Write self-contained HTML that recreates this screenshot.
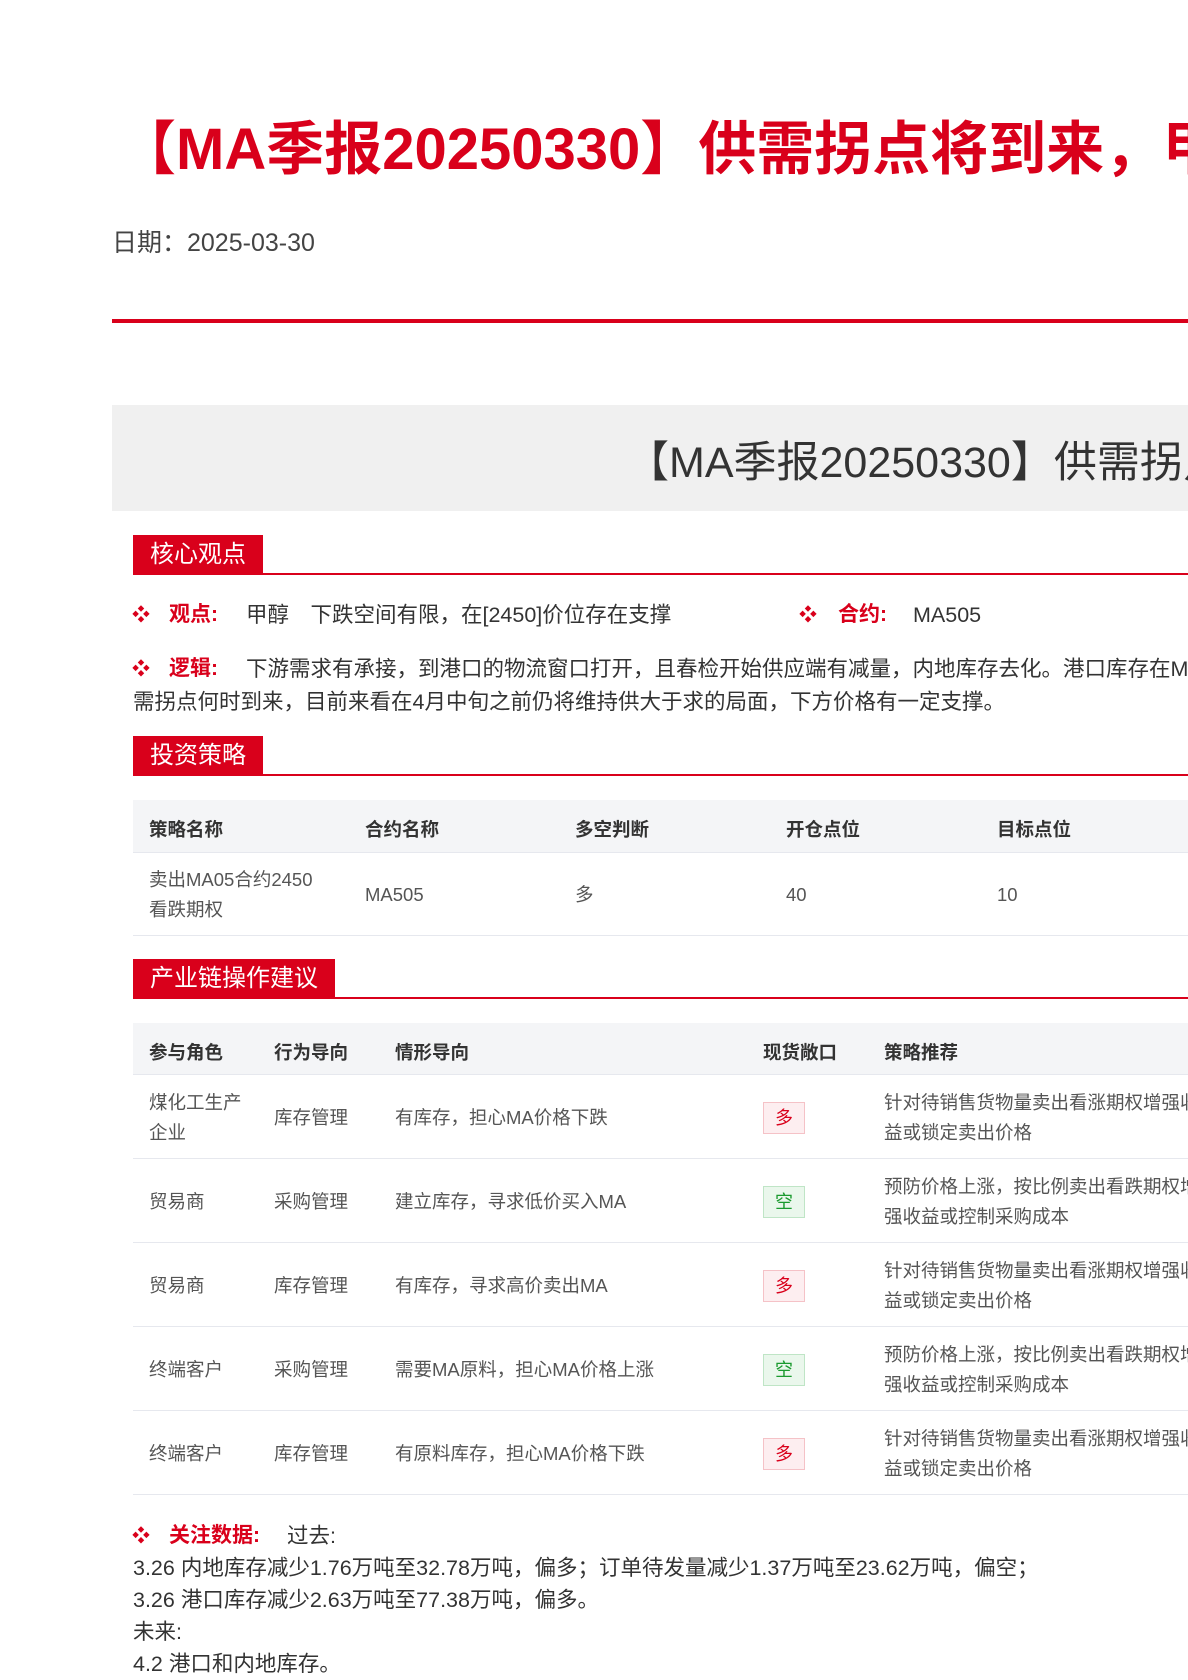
<!DOCTYPE html>
<html><head><meta charset="utf-8">
<style>
*{margin:0;padding:0;box-sizing:border-box}
html,body{width:1188px;height:1680px;overflow:hidden}
body{background:#fff;font-family:"Liberation Sans","Noto Sans CJK SC",sans-serif;color:#333;position:relative}
.a{position:absolute;white-space:nowrap}
.title{left:118px;top:115px;font-size:58px;font-weight:bold;color:#d9001b;line-height:70px}
.date{left:112px;top:223px;font-size:25px;color:#444}
.redline{left:112px;top:319px;width:1076px;height:4px;background:#d9001b}
.gray{left:112px;top:405px;width:1076px;height:106px;background:#f0f0f0}
.sub{left:626px;top:436px;font-size:43px;color:#333;line-height:54px}
.tag{left:133px;height:40px;background:#d9001b;color:#fff;font-size:24px;line-height:40px;padding:0 17px}
.tagline{left:133px;width:1055px;height:2px;background:#d9001b}
.bul{color:#d9001b;font-size:18px}
.lab{color:#d9001b;font-weight:bold;font-size:21px;line-height:28px}
.txt{font-size:21.5px;color:#333;line-height:28px}
.th{background:#f4f5f7;left:133px;width:1055px;border-bottom:1px solid #e6e8ee}
.row{left:133px;width:1055px;border-bottom:1px solid #e6e8ee}
.h{font-size:18.5px;font-weight:bold;color:#333}
.c{font-size:18.5px;color:#555;line-height:30px}
.badge{width:42px;height:32px;font-size:18px;line-height:30px;text-align:center;border:1px solid}
.up{background:#fdeef0;color:#d9001b;border-color:#f5c2c7}
.dn{background:#eaf7ec;color:#1a9a2e;border-color:#bfe5c6}
</style></head><body>
<div class="a title">【MA季报20250330】供需拐点将到来，甲醇价格有支撑</div>
<div class="a date">日期：2025-03-30</div>
<div class="a redline"></div>
<div class="a gray"></div>
<div class="a sub">【MA季报20250330】供需拐点将到来，甲醇价格有支撑</div>

<div class="a tag" style="top:535px">核心观点</div>
<div class="a tagline" style="top:573px"></div>

<div class="a bul" style="left:132px;top:601px">❖</div>
<div class="a lab" style="left:169px;top:601px">观点:</div>
<div class="a txt" style="left:246px;top:601px">甲醇　下跌空间有限，在[2450]价位存在支撑</div>
<div class="a bul" style="left:799px;top:601px">❖</div>
<div class="a lab" style="left:838px;top:601px">合约:</div>
<div class="a txt" style="left:913px;top:601px">MA505</div>

<div class="a bul" style="left:132px;top:655px">❖</div>
<div class="a lab" style="left:169px;top:655px">逻辑:</div>
<div class="a txt" style="left:246px;top:655px">下游需求有承接，到港口的物流窗口打开，且春检开始供应端有减量，内地库存去化。港口库存在MTO装置</div>
<div class="a txt" style="left:133px;top:688px">需拐点何时到来，目前来看在4月中旬之前仍将维持供大于求的局面，下方价格有一定支撑。</div>

<div class="a tag" style="top:736px">投资策略</div>
<div class="a tagline" style="top:774px"></div>

<div class="a th" style="top:800px;height:53px"></div>
<div class="a h" style="left:149px;top:816px">策略名称</div>
<div class="a h" style="left:365px;top:816px">合约名称</div>
<div class="a h" style="left:575px;top:816px">多空判断</div>
<div class="a h" style="left:786px;top:816px">开仓点位</div>
<div class="a h" style="left:997px;top:816px">目标点位</div>
<div class="a row" style="top:853px;height:83px"></div>
<div class="a c" style="left:149px;top:865px">卖出MA05合约2450<br>看跌期权</div>
<div class="a c" style="left:365px;top:880px">MA505</div>
<div class="a c" style="left:575px;top:880px">多</div>
<div class="a c" style="left:786px;top:880px">40</div>
<div class="a c" style="left:997px;top:880px">10</div>

<div class="a tag" style="top:959px">产业链操作建议</div>
<div class="a tagline" style="top:997px"></div>

<div class="a th" style="top:1023px;height:52px"></div>
<div class="a h" style="left:149px;top:1039px">参与角色</div>
<div class="a h" style="left:274px;top:1039px">行为导向</div>
<div class="a h" style="left:395px;top:1039px">情形导向</div>
<div class="a h" style="left:763px;top:1039px">现货敞口</div>
<div class="a h" style="left:884px;top:1039px">策略推荐</div>

<div class="a row" style="top:1075px;height:84px"></div>
<div class="a c" style="left:149px;top:1088px">煤化工生产<br>企业</div>
<div class="a c" style="left:274px;top:1103px">库存管理</div>
<div class="a c" style="left:395px;top:1103px">有库存，担心MA价格下跌</div>
<div class="a badge up" style="left:763px;top:1102px">多</div>
<div class="a c" style="left:884px;top:1088px">针对待销售货物量卖出看涨期权增强收<br>益或锁定卖出价格</div>

<div class="a row" style="top:1159px;height:84px"></div>
<div class="a c" style="left:149px;top:1187px">贸易商</div>
<div class="a c" style="left:274px;top:1187px">采购管理</div>
<div class="a c" style="left:395px;top:1187px">建立库存，寻求低价买入MA</div>
<div class="a badge dn" style="left:763px;top:1186px">空</div>
<div class="a c" style="left:884px;top:1172px">预防价格上涨，按比例卖出看跌期权增<br>强收益或控制采购成本</div>

<div class="a row" style="top:1243px;height:84px"></div>
<div class="a c" style="left:149px;top:1271px">贸易商</div>
<div class="a c" style="left:274px;top:1271px">库存管理</div>
<div class="a c" style="left:395px;top:1271px">有库存，寻求高价卖出MA</div>
<div class="a badge up" style="left:763px;top:1270px">多</div>
<div class="a c" style="left:884px;top:1256px">针对待销售货物量卖出看涨期权增强收<br>益或锁定卖出价格</div>

<div class="a row" style="top:1327px;height:84px"></div>
<div class="a c" style="left:149px;top:1355px">终端客户</div>
<div class="a c" style="left:274px;top:1355px">采购管理</div>
<div class="a c" style="left:395px;top:1355px">需要MA原料，担心MA价格上涨</div>
<div class="a badge dn" style="left:763px;top:1354px">空</div>
<div class="a c" style="left:884px;top:1340px">预防价格上涨，按比例卖出看跌期权增<br>强收益或控制采购成本</div>

<div class="a row" style="top:1411px;height:84px"></div>
<div class="a c" style="left:149px;top:1439px">终端客户</div>
<div class="a c" style="left:274px;top:1439px">库存管理</div>
<div class="a c" style="left:395px;top:1439px">有原料库存，担心MA价格下跌</div>
<div class="a badge up" style="left:763px;top:1438px">多</div>
<div class="a c" style="left:884px;top:1424px">针对待销售货物量卖出看涨期权增强收<br>益或锁定卖出价格</div>

<div class="a bul" style="left:132px;top:1522px">❖</div>
<div class="a lab" style="left:169px;top:1522px">关注数据:</div>
<div class="a txt" style="left:287px;top:1522px">过去:</div>
<div class="a txt" style="left:133px;top:1554px">3.26 内地库存减少1.76万吨至32.78万吨，偏多；订单待发量减少1.37万吨至23.62万吨，偏空；</div>
<div class="a txt" style="left:133px;top:1586px">3.26 港口库存减少2.63万吨至77.38万吨，偏多。</div>
<div class="a txt" style="left:133px;top:1618px">未来:</div>
<div class="a txt" style="left:133px;top:1650px">4.2 港口和内地库存。</div>
</body></html>
